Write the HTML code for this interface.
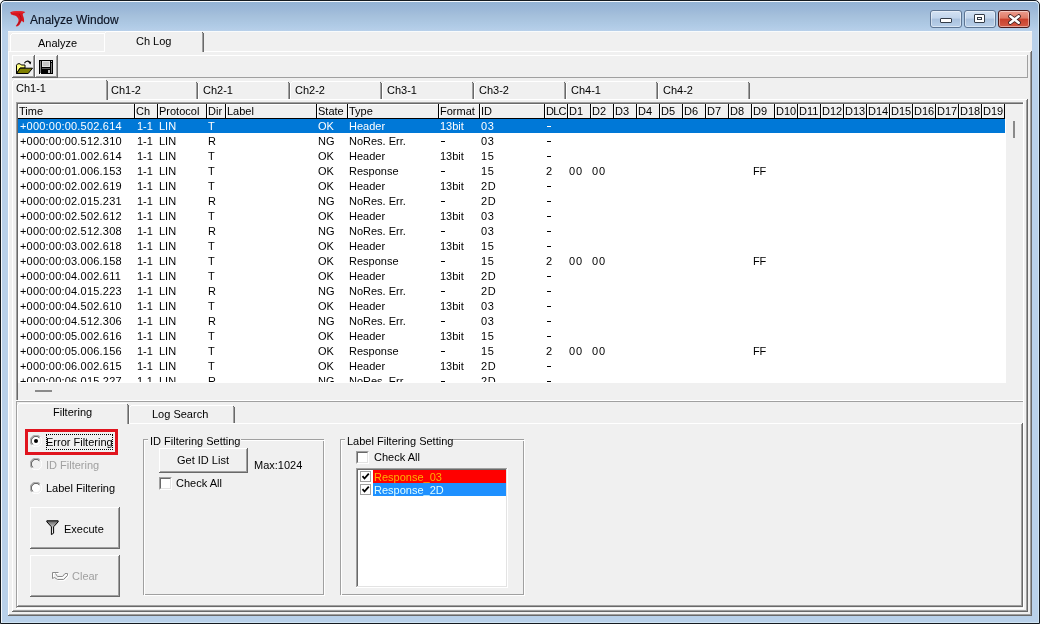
<!DOCTYPE html><html><head><meta charset="utf-8"><style>
html,body{margin:0;padding:0;}
body{width:1040px;height:624px;overflow:hidden;position:relative;background:#ffffff;font-family:"Liberation Sans",sans-serif;}
div{position:absolute;box-sizing:border-box;}
.t{white-space:pre;font-size:11px;}
</style></head><body><div style="left:0;top:0;width:1040px;height:624px;overflow:hidden;will-change:transform">
<div style="left:0px;top:0px;width:1040px;height:624px;background:#b9d1ea;border:1px solid #141a20;border-radius:5px 5px 0 0"></div>
<div style="left:1px;top:1px;width:1038px;height:622px;border:1px solid #f4f8fc;border-radius:5px 5px 0 0;border-right-color:#cfe3f2;border-bottom-color:#cfe3f2"></div>
<div style="left:2px;top:2px;width:1036px;height:29px;background:linear-gradient(#93b3d4 0%,#9cb8d8 25%,#a6c1dc 50%,#afcae5 80%,#b8d0ea 100%);border-radius:4px 4px 0 0"></div>
<div style="left:2px;top:31px;width:6px;height:585px;background:#b9d1ea"></div>
<div style="left:1032px;top:31px;width:6px;height:585px;background:#b9d1ea"></div>
<svg style="position:absolute;left:8px;top:8px" width="20" height="20" viewBox="8 8 20 20">
<path d="M10.2 12.2 C12 11.2 17 10.8 21 11 C23 11.2 24.5 11.6 25.3 12.3 L23.4 13.3 C22.5 14 22.6 15 23.2 16.2 C23.9 17.8 24.3 20 24 22.4 C23 21.8 22.2 21.2 21.6 20.8 C21 22.5 20 24 19.5 24.8 C18.5 25.8 17.5 26.3 16.7 26.6 L15.7 26 C17 24.5 18.6 22 18.6 20.2 C18.6 18.5 17.5 17.2 16 16 C14.5 15.2 12.5 14.8 11.2 14.4 Z" fill="#d8161e"/>
<path d="M19 14 C21 16 21.5 19 20.5 21.5 M17.5 25 C18.5 24 19.5 22.5 20 21" stroke="#a01020" stroke-width="0.9" fill="none"/>
<path d="M12 12.3 C15 11.8 19 11.6 23 12" stroke="#f04048" stroke-width="0.7" fill="none"/>
</svg>
<div class="t" style="left:30px;top:12.84px;color:#0c1424;font-size:12px;line-height:14px;-webkit-text-stroke:0.15px #0c1424">Analyze Window</div>
<div style="left:930px;top:10px;width:32px;height:18px;border:1px solid #5d7593;border-radius:3px;background:linear-gradient(#d3e2f3 0%,#c1d5ec 45%,#a9c1dd 50%,#b9d0ea 100%);box-shadow:inset 0 0 0 1px rgba(255,255,255,0.45)"><div style="left:9px;top:7px;width:12px;height:5px;background:#fff;border:1px solid #333c48;border-radius:1px"></div></div>
<div style="left:964px;top:10px;width:32px;height:18px;border:1px solid #5d7593;border-radius:3px;background:linear-gradient(#d3e2f3 0%,#c1d5ec 45%,#a9c1dd 50%,#b9d0ea 100%);box-shadow:inset 0 0 0 1px rgba(255,255,255,0.45)"><div style="left:9px;top:3px;width:11px;height:9px;background:#fff;border:1px solid #333c48;border-radius:1px"><div style="left:2px;top:2px;width:5px;height:3px;background:#fff;border:1px solid #333c48"></div></div></div>
<div style="left:998px;top:10px;width:32px;height:18px;border:1px solid #4a1a1a;border-radius:3px;background:linear-gradient(#eb9d8f 0%,#e07a66 45%,#c9402c 50%,#d45a45 100%);box-shadow:inset 0 0 0 1px rgba(255,255,255,0.45)"><svg style="position:absolute;left:9px;top:3px" width="13" height="11" viewBox="0 0 13 11"><path d="M2.3 2.3 L10.7 8.7 M10.7 2.3 L2.3 8.7" stroke="#3a2020" stroke-width="4.2" stroke-linecap="round"/><path d="M2.3 2.3 L10.7 8.7 M10.7 2.3 L2.3 8.7" stroke="#fff" stroke-width="2.5" stroke-linecap="round"/></svg></div>
<div style="left:8px;top:31px;width:1024px;height:585px;background:#f0f0f0"></div>
<div style="left:8px;top:31px;width:1024px;height:1px;background:#f8fbfc"></div>
<div style="left:8px;top:51px;width:1024px;height:1px;background:#ffffff"></div>
<div style="left:8px;top:51px;width:1px;height:565px;background:#ffffff"></div>
<div style="left:1031px;top:51px;width:1px;height:565px;background:#696969"></div>
<div style="left:1030px;top:52px;width:1px;height:563px;background:#a0a0a0"></div>
<div style="left:8px;top:615px;width:1024px;height:1px;background:#696969"></div>
<div style="left:9px;top:614px;width:1022px;height:1px;background:#a0a0a0"></div>
<div style="left:12px;top:33px;width:92px;height:1px;background:#ffffff"></div>
<div style="left:10px;top:35px;width:1px;height:16px;background:#ffffff"></div>
<div style="left:11px;top:34px;width:1px;height:1px;background:#ffffff"></div>
<div class="t" style="left:38px;top:36.19px;color:#000;font-size:11px;line-height:14px;">Analyze</div>
<div style="left:105px;top:32px;width:98px;height:20px;background:#f0f0f0"></div>
<div style="left:106px;top:31px;width:96px;height:1px;background:#ffffff"></div>
<div style="left:104px;top:33px;width:1px;height:19px;background:#ffffff"></div>
<div style="left:105px;top:32px;width:1px;height:1px;background:#ffffff"></div>
<div style="left:203px;top:33px;width:1px;height:19px;background:#696969"></div>
<div style="left:202px;top:32px;width:1px;height:20px;background:#a0a0a0"></div>
<div style="left:202px;top:32px;width:1px;height:1px;background:#696969"></div>
<div class="t" style="left:136px;top:34.19px;color:#000;font-size:11px;line-height:14px;">Ch Log</div>
<div style="left:12px;top:55px;width:1016px;height:1px;background:#ffffff"></div>
<div style="left:12px;top:55px;width:1px;height:23px;background:#ffffff"></div>
<div style="left:1027px;top:55px;width:1px;height:23px;background:#a0a0a0"></div>
<div style="left:12px;top:77px;width:1016px;height:1px;background:#a0a0a0"></div>
<div style="left:12px;top:55px;width:23px;height:1px;background:#ffffff"></div>
<div style="left:12px;top:55px;width:1px;height:23px;background:#ffffff"></div>
<div style="left:34px;top:55px;width:1px;height:23px;background:#696969"></div>
<div style="left:12px;top:77px;width:23px;height:1px;background:#696969"></div>
<div style="left:33px;top:56px;width:1px;height:21px;background:#a0a0a0"></div>
<div style="left:13px;top:76px;width:21px;height:1px;background:#a0a0a0"></div>
<div style="left:35px;top:55px;width:23px;height:1px;background:#ffffff"></div>
<div style="left:35px;top:55px;width:1px;height:23px;background:#ffffff"></div>
<div style="left:57px;top:55px;width:1px;height:23px;background:#696969"></div>
<div style="left:35px;top:77px;width:23px;height:1px;background:#696969"></div>
<div style="left:56px;top:56px;width:1px;height:21px;background:#a0a0a0"></div>
<div style="left:36px;top:76px;width:21px;height:1px;background:#a0a0a0"></div>
<svg style="position:absolute;left:14px;top:58px" width="20" height="18" viewBox="14 58 20 18">
<path d="M24.5 63.2 C25.5 61 28 60.3 29.8 62.2" fill="none" stroke="#000" stroke-width="1.1"/>
<path d="M28.3 62.6 L30.6 64.6 L31.2 61.6 Z" fill="#000"/>
<path d="M16.5 73.5 L16.5 65.2 L17.7 63.8 L20.2 63.8 L21.3 65 L25 65 L25 68 L20 68 L16.5 73.5 Z" fill="#ffff80" stroke="#000" stroke-width="1"/>
<path d="M16.5 73.5 L20.3 68.2 L32.5 68.2 L28.2 73.5 Z" fill="#808000" stroke="#000" stroke-width="1" stroke-linejoin="round"/>
</svg>
<svg style="position:absolute;left:38px;top:59px" width="16" height="16" viewBox="38 59 16 16" shape-rendering="crispEdges">
<rect x="39" y="60" width="14" height="14" fill="#000"/>
<rect x="40" y="61" width="1" height="12" fill="#808080"/>
<rect x="51" y="63" width="1" height="10" fill="#808080"/>
<rect x="51" y="61" width="1" height="1" fill="#c0c0c0"/>
<rect x="42" y="61" width="8" height="6" fill="#e0e0e0"/>
<rect x="43" y="62" width="6" height="4" fill="#c4c4c4"/>
<rect x="42" y="68" width="8" height="1" fill="#606060"/>
<rect x="48" y="70" width="2" height="3" fill="#c0c0c0"/>
<rect x="40" y="73" width="1" height="1" fill="#ffffff"/>
</svg>
<div style="left:12px;top:99px;width:1016px;height:1px;background:#ffffff"></div>
<div style="left:12px;top:99px;width:1px;height:513px;background:#ffffff"></div>
<div style="left:1027px;top:99px;width:1px;height:513px;background:#696969"></div>
<div style="left:1026px;top:100px;width:1px;height:511px;background:#a0a0a0"></div>
<div style="left:12px;top:611px;width:1016px;height:1px;background:#696969"></div>
<div style="left:13px;top:610px;width:1014px;height:1px;background:#a0a0a0"></div>
<div style="left:106px;top:81px;width:92px;height:18px;background:#f0f0f0"></div>
<div style="left:108px;top:81px;width:88px;height:1px;background:#ffffff"></div>
<div style="left:106px;top:83px;width:1px;height:16px;background:#ffffff"></div>
<div style="left:107px;top:82px;width:1px;height:1px;background:#ffffff"></div>
<div style="left:197px;top:83px;width:1px;height:16px;background:#696969"></div>
<div style="left:196px;top:82px;width:1px;height:17px;background:#a0a0a0"></div>
<div style="left:196px;top:82px;width:1px;height:1px;background:#696969"></div>
<div class="t" style="left:111px;top:83.19px;color:#000;font-size:11px;line-height:14px;">Ch1-2</div>
<div style="left:198px;top:81px;width:92px;height:18px;background:#f0f0f0"></div>
<div style="left:200px;top:81px;width:88px;height:1px;background:#ffffff"></div>
<div style="left:198px;top:83px;width:1px;height:16px;background:#ffffff"></div>
<div style="left:199px;top:82px;width:1px;height:1px;background:#ffffff"></div>
<div style="left:289px;top:83px;width:1px;height:16px;background:#696969"></div>
<div style="left:288px;top:82px;width:1px;height:17px;background:#a0a0a0"></div>
<div style="left:288px;top:82px;width:1px;height:1px;background:#696969"></div>
<div class="t" style="left:203px;top:83.19px;color:#000;font-size:11px;line-height:14px;">Ch2-1</div>
<div style="left:290px;top:81px;width:92px;height:18px;background:#f0f0f0"></div>
<div style="left:292px;top:81px;width:88px;height:1px;background:#ffffff"></div>
<div style="left:290px;top:83px;width:1px;height:16px;background:#ffffff"></div>
<div style="left:291px;top:82px;width:1px;height:1px;background:#ffffff"></div>
<div style="left:381px;top:83px;width:1px;height:16px;background:#696969"></div>
<div style="left:380px;top:82px;width:1px;height:17px;background:#a0a0a0"></div>
<div style="left:380px;top:82px;width:1px;height:1px;background:#696969"></div>
<div class="t" style="left:295px;top:83.19px;color:#000;font-size:11px;line-height:14px;">Ch2-2</div>
<div style="left:382px;top:81px;width:92px;height:18px;background:#f0f0f0"></div>
<div style="left:384px;top:81px;width:88px;height:1px;background:#ffffff"></div>
<div style="left:382px;top:83px;width:1px;height:16px;background:#ffffff"></div>
<div style="left:383px;top:82px;width:1px;height:1px;background:#ffffff"></div>
<div style="left:473px;top:83px;width:1px;height:16px;background:#696969"></div>
<div style="left:472px;top:82px;width:1px;height:17px;background:#a0a0a0"></div>
<div style="left:472px;top:82px;width:1px;height:1px;background:#696969"></div>
<div class="t" style="left:387px;top:83.19px;color:#000;font-size:11px;line-height:14px;">Ch3-1</div>
<div style="left:474px;top:81px;width:92px;height:18px;background:#f0f0f0"></div>
<div style="left:476px;top:81px;width:88px;height:1px;background:#ffffff"></div>
<div style="left:474px;top:83px;width:1px;height:16px;background:#ffffff"></div>
<div style="left:475px;top:82px;width:1px;height:1px;background:#ffffff"></div>
<div style="left:565px;top:83px;width:1px;height:16px;background:#696969"></div>
<div style="left:564px;top:82px;width:1px;height:17px;background:#a0a0a0"></div>
<div style="left:564px;top:82px;width:1px;height:1px;background:#696969"></div>
<div class="t" style="left:479px;top:83.19px;color:#000;font-size:11px;line-height:14px;">Ch3-2</div>
<div style="left:566px;top:81px;width:92px;height:18px;background:#f0f0f0"></div>
<div style="left:568px;top:81px;width:88px;height:1px;background:#ffffff"></div>
<div style="left:566px;top:83px;width:1px;height:16px;background:#ffffff"></div>
<div style="left:567px;top:82px;width:1px;height:1px;background:#ffffff"></div>
<div style="left:657px;top:83px;width:1px;height:16px;background:#696969"></div>
<div style="left:656px;top:82px;width:1px;height:17px;background:#a0a0a0"></div>
<div style="left:656px;top:82px;width:1px;height:1px;background:#696969"></div>
<div class="t" style="left:571px;top:83.19px;color:#000;font-size:11px;line-height:14px;">Ch4-1</div>
<div style="left:658px;top:81px;width:92px;height:18px;background:#f0f0f0"></div>
<div style="left:660px;top:81px;width:88px;height:1px;background:#ffffff"></div>
<div style="left:658px;top:83px;width:1px;height:16px;background:#ffffff"></div>
<div style="left:659px;top:82px;width:1px;height:1px;background:#ffffff"></div>
<div style="left:749px;top:83px;width:1px;height:16px;background:#696969"></div>
<div style="left:748px;top:82px;width:1px;height:17px;background:#a0a0a0"></div>
<div style="left:748px;top:82px;width:1px;height:1px;background:#696969"></div>
<div class="t" style="left:663px;top:83.19px;color:#000;font-size:11px;line-height:14px;">Ch4-2</div>
<div style="left:12px;top:79px;width:96px;height:21px;background:#f0f0f0"></div>
<div style="left:14px;top:79px;width:92px;height:1px;background:#ffffff"></div>
<div style="left:12px;top:81px;width:1px;height:19px;background:#ffffff"></div>
<div style="left:13px;top:80px;width:1px;height:1px;background:#ffffff"></div>
<div style="left:107px;top:81px;width:1px;height:19px;background:#696969"></div>
<div style="left:106px;top:80px;width:1px;height:20px;background:#a0a0a0"></div>
<div style="left:106px;top:80px;width:1px;height:1px;background:#696969"></div>
<div class="t" style="left:16px;top:81.19px;color:#000;font-size:11px;line-height:14px;">Ch1-1</div>
<div style="left:16px;top:102px;width:1008px;height:1px;background:#a0a0a0"></div>
<div style="left:16px;top:102px;width:1px;height:299px;background:#a0a0a0"></div>
<div style="left:17px;top:103px;width:1006px;height:1px;background:#696969"></div>
<div style="left:17px;top:103px;width:1px;height:297px;background:#696969"></div>
<div style="left:16px;top:400px;width:1008px;height:1px;background:#ffffff"></div>
<div style="left:1023px;top:102px;width:1px;height:299px;background:#ffffff"></div>
<div style="left:18px;top:104px;width:1005px;height:295px;background:#f0f0f0"></div>
<div style="left:18px;top:119px;width:988px;height:264px;background:#ffffff"></div>
<div style="left:18px;top:104px;width:117px;height:15px;background:#f0f0f0"></div>
<div style="left:18px;top:104px;width:116px;height:1px;background:#ffffff"></div>
<div style="left:18px;top:104px;width:1px;height:14px;background:#ffffff"></div>
<div style="left:134px;top:104px;width:1px;height:15px;background:#000"></div>
<div style="left:18px;top:118px;width:117px;height:1px;background:#000"></div>
<div class="t" style="left:19px;top:104.19px;color:#000;font-size:11px;line-height:14px;">Time</div>
<div style="left:135px;top:104px;width:23px;height:15px;background:#f0f0f0"></div>
<div style="left:135px;top:104px;width:22px;height:1px;background:#ffffff"></div>
<div style="left:135px;top:104px;width:1px;height:14px;background:#ffffff"></div>
<div style="left:157px;top:104px;width:1px;height:15px;background:#000"></div>
<div style="left:135px;top:118px;width:23px;height:1px;background:#000"></div>
<div class="t" style="left:136px;top:104.19px;color:#000;font-size:11px;line-height:14px;">Ch</div>
<div style="left:158px;top:104px;width:49px;height:15px;background:#f0f0f0"></div>
<div style="left:158px;top:104px;width:48px;height:1px;background:#ffffff"></div>
<div style="left:158px;top:104px;width:1px;height:14px;background:#ffffff"></div>
<div style="left:206px;top:104px;width:1px;height:15px;background:#000"></div>
<div style="left:158px;top:118px;width:49px;height:1px;background:#000"></div>
<div class="t" style="left:159px;top:104.19px;color:#000;font-size:11px;line-height:14px;">Protocol</div>
<div style="left:207px;top:104px;width:19px;height:15px;background:#f0f0f0"></div>
<div style="left:207px;top:104px;width:18px;height:1px;background:#ffffff"></div>
<div style="left:207px;top:104px;width:1px;height:14px;background:#ffffff"></div>
<div style="left:225px;top:104px;width:1px;height:15px;background:#000"></div>
<div style="left:207px;top:118px;width:19px;height:1px;background:#000"></div>
<div class="t" style="left:208px;top:104.19px;color:#000;font-size:11px;line-height:14px;">Dir</div>
<div style="left:226px;top:104px;width:91px;height:15px;background:#f0f0f0"></div>
<div style="left:226px;top:104px;width:90px;height:1px;background:#ffffff"></div>
<div style="left:226px;top:104px;width:1px;height:14px;background:#ffffff"></div>
<div style="left:316px;top:104px;width:1px;height:15px;background:#000"></div>
<div style="left:226px;top:118px;width:91px;height:1px;background:#000"></div>
<div class="t" style="left:227px;top:104.19px;color:#000;font-size:11px;line-height:14px;">Label</div>
<div style="left:317px;top:104px;width:31px;height:15px;background:#f0f0f0"></div>
<div style="left:317px;top:104px;width:30px;height:1px;background:#ffffff"></div>
<div style="left:317px;top:104px;width:1px;height:14px;background:#ffffff"></div>
<div style="left:347px;top:104px;width:1px;height:15px;background:#000"></div>
<div style="left:317px;top:118px;width:31px;height:1px;background:#000"></div>
<div class="t" style="left:318px;top:104.19px;color:#000;font-size:11px;line-height:14px;">State</div>
<div style="left:348px;top:104px;width:91px;height:15px;background:#f0f0f0"></div>
<div style="left:348px;top:104px;width:90px;height:1px;background:#ffffff"></div>
<div style="left:348px;top:104px;width:1px;height:14px;background:#ffffff"></div>
<div style="left:438px;top:104px;width:1px;height:15px;background:#000"></div>
<div style="left:348px;top:118px;width:91px;height:1px;background:#000"></div>
<div class="t" style="left:349px;top:104.19px;color:#000;font-size:11px;line-height:14px;">Type</div>
<div style="left:439px;top:104px;width:41px;height:15px;background:#f0f0f0"></div>
<div style="left:439px;top:104px;width:40px;height:1px;background:#ffffff"></div>
<div style="left:439px;top:104px;width:1px;height:14px;background:#ffffff"></div>
<div style="left:479px;top:104px;width:1px;height:15px;background:#000"></div>
<div style="left:439px;top:118px;width:41px;height:1px;background:#000"></div>
<div class="t" style="left:440px;top:104.19px;color:#000;font-size:11px;line-height:14px;">Format</div>
<div style="left:480px;top:104px;width:65px;height:15px;background:#f0f0f0"></div>
<div style="left:480px;top:104px;width:64px;height:1px;background:#ffffff"></div>
<div style="left:480px;top:104px;width:1px;height:14px;background:#ffffff"></div>
<div style="left:544px;top:104px;width:1px;height:15px;background:#000"></div>
<div style="left:480px;top:118px;width:65px;height:1px;background:#000"></div>
<div class="t" style="left:481px;top:104.19px;color:#000;font-size:11px;line-height:14px;">ID</div>
<div style="left:545px;top:104px;width:23px;height:15px;background:#f0f0f0"></div>
<div style="left:545px;top:104px;width:22px;height:1px;background:#ffffff"></div>
<div style="left:545px;top:104px;width:1px;height:14px;background:#ffffff"></div>
<div style="left:567px;top:104px;width:1px;height:15px;background:#000"></div>
<div style="left:545px;top:118px;width:23px;height:1px;background:#000"></div>
<div class="t" style="left:546px;top:104.19px;color:#000;font-size:11px;line-height:14px;letter-spacing:-0.8px">DLC</div>
<div style="left:568px;top:104px;width:23px;height:15px;background:#f0f0f0"></div>
<div style="left:568px;top:104px;width:22px;height:1px;background:#ffffff"></div>
<div style="left:568px;top:104px;width:1px;height:14px;background:#ffffff"></div>
<div style="left:590px;top:104px;width:1px;height:15px;background:#000"></div>
<div style="left:568px;top:118px;width:23px;height:1px;background:#000"></div>
<div class="t" style="left:569px;top:104.19px;color:#000;font-size:11px;line-height:14px;">D1</div>
<div style="left:591px;top:104px;width:23px;height:15px;background:#f0f0f0"></div>
<div style="left:591px;top:104px;width:22px;height:1px;background:#ffffff"></div>
<div style="left:591px;top:104px;width:1px;height:14px;background:#ffffff"></div>
<div style="left:613px;top:104px;width:1px;height:15px;background:#000"></div>
<div style="left:591px;top:118px;width:23px;height:1px;background:#000"></div>
<div class="t" style="left:592px;top:104.19px;color:#000;font-size:11px;line-height:14px;">D2</div>
<div style="left:614px;top:104px;width:23px;height:15px;background:#f0f0f0"></div>
<div style="left:614px;top:104px;width:22px;height:1px;background:#ffffff"></div>
<div style="left:614px;top:104px;width:1px;height:14px;background:#ffffff"></div>
<div style="left:636px;top:104px;width:1px;height:15px;background:#000"></div>
<div style="left:614px;top:118px;width:23px;height:1px;background:#000"></div>
<div class="t" style="left:615px;top:104.19px;color:#000;font-size:11px;line-height:14px;">D3</div>
<div style="left:637px;top:104px;width:23px;height:15px;background:#f0f0f0"></div>
<div style="left:637px;top:104px;width:22px;height:1px;background:#ffffff"></div>
<div style="left:637px;top:104px;width:1px;height:14px;background:#ffffff"></div>
<div style="left:659px;top:104px;width:1px;height:15px;background:#000"></div>
<div style="left:637px;top:118px;width:23px;height:1px;background:#000"></div>
<div class="t" style="left:638px;top:104.19px;color:#000;font-size:11px;line-height:14px;">D4</div>
<div style="left:660px;top:104px;width:23px;height:15px;background:#f0f0f0"></div>
<div style="left:660px;top:104px;width:22px;height:1px;background:#ffffff"></div>
<div style="left:660px;top:104px;width:1px;height:14px;background:#ffffff"></div>
<div style="left:682px;top:104px;width:1px;height:15px;background:#000"></div>
<div style="left:660px;top:118px;width:23px;height:1px;background:#000"></div>
<div class="t" style="left:661px;top:104.19px;color:#000;font-size:11px;line-height:14px;">D5</div>
<div style="left:683px;top:104px;width:23px;height:15px;background:#f0f0f0"></div>
<div style="left:683px;top:104px;width:22px;height:1px;background:#ffffff"></div>
<div style="left:683px;top:104px;width:1px;height:14px;background:#ffffff"></div>
<div style="left:705px;top:104px;width:1px;height:15px;background:#000"></div>
<div style="left:683px;top:118px;width:23px;height:1px;background:#000"></div>
<div class="t" style="left:684px;top:104.19px;color:#000;font-size:11px;line-height:14px;">D6</div>
<div style="left:706px;top:104px;width:23px;height:15px;background:#f0f0f0"></div>
<div style="left:706px;top:104px;width:22px;height:1px;background:#ffffff"></div>
<div style="left:706px;top:104px;width:1px;height:14px;background:#ffffff"></div>
<div style="left:728px;top:104px;width:1px;height:15px;background:#000"></div>
<div style="left:706px;top:118px;width:23px;height:1px;background:#000"></div>
<div class="t" style="left:707px;top:104.19px;color:#000;font-size:11px;line-height:14px;">D7</div>
<div style="left:729px;top:104px;width:23px;height:15px;background:#f0f0f0"></div>
<div style="left:729px;top:104px;width:22px;height:1px;background:#ffffff"></div>
<div style="left:729px;top:104px;width:1px;height:14px;background:#ffffff"></div>
<div style="left:751px;top:104px;width:1px;height:15px;background:#000"></div>
<div style="left:729px;top:118px;width:23px;height:1px;background:#000"></div>
<div class="t" style="left:730px;top:104.19px;color:#000;font-size:11px;line-height:14px;">D8</div>
<div style="left:752px;top:104px;width:23px;height:15px;background:#f0f0f0"></div>
<div style="left:752px;top:104px;width:22px;height:1px;background:#ffffff"></div>
<div style="left:752px;top:104px;width:1px;height:14px;background:#ffffff"></div>
<div style="left:774px;top:104px;width:1px;height:15px;background:#000"></div>
<div style="left:752px;top:118px;width:23px;height:1px;background:#000"></div>
<div class="t" style="left:753px;top:104.19px;color:#000;font-size:11px;line-height:14px;">D9</div>
<div style="left:775px;top:104px;width:23px;height:15px;background:#f0f0f0"></div>
<div style="left:775px;top:104px;width:22px;height:1px;background:#ffffff"></div>
<div style="left:775px;top:104px;width:1px;height:14px;background:#ffffff"></div>
<div style="left:797px;top:104px;width:1px;height:15px;background:#000"></div>
<div style="left:775px;top:118px;width:23px;height:1px;background:#000"></div>
<div class="t" style="left:776px;top:104.19px;color:#000;font-size:11px;line-height:14px;">D10</div>
<div style="left:798px;top:104px;width:23px;height:15px;background:#f0f0f0"></div>
<div style="left:798px;top:104px;width:22px;height:1px;background:#ffffff"></div>
<div style="left:798px;top:104px;width:1px;height:14px;background:#ffffff"></div>
<div style="left:820px;top:104px;width:1px;height:15px;background:#000"></div>
<div style="left:798px;top:118px;width:23px;height:1px;background:#000"></div>
<div class="t" style="left:799px;top:104.19px;color:#000;font-size:11px;line-height:14px;">D11</div>
<div style="left:821px;top:104px;width:23px;height:15px;background:#f0f0f0"></div>
<div style="left:821px;top:104px;width:22px;height:1px;background:#ffffff"></div>
<div style="left:821px;top:104px;width:1px;height:14px;background:#ffffff"></div>
<div style="left:843px;top:104px;width:1px;height:15px;background:#000"></div>
<div style="left:821px;top:118px;width:23px;height:1px;background:#000"></div>
<div class="t" style="left:822px;top:104.19px;color:#000;font-size:11px;line-height:14px;">D12</div>
<div style="left:844px;top:104px;width:23px;height:15px;background:#f0f0f0"></div>
<div style="left:844px;top:104px;width:22px;height:1px;background:#ffffff"></div>
<div style="left:844px;top:104px;width:1px;height:14px;background:#ffffff"></div>
<div style="left:866px;top:104px;width:1px;height:15px;background:#000"></div>
<div style="left:844px;top:118px;width:23px;height:1px;background:#000"></div>
<div class="t" style="left:845px;top:104.19px;color:#000;font-size:11px;line-height:14px;">D13</div>
<div style="left:867px;top:104px;width:23px;height:15px;background:#f0f0f0"></div>
<div style="left:867px;top:104px;width:22px;height:1px;background:#ffffff"></div>
<div style="left:867px;top:104px;width:1px;height:14px;background:#ffffff"></div>
<div style="left:889px;top:104px;width:1px;height:15px;background:#000"></div>
<div style="left:867px;top:118px;width:23px;height:1px;background:#000"></div>
<div class="t" style="left:868px;top:104.19px;color:#000;font-size:11px;line-height:14px;">D14</div>
<div style="left:890px;top:104px;width:23px;height:15px;background:#f0f0f0"></div>
<div style="left:890px;top:104px;width:22px;height:1px;background:#ffffff"></div>
<div style="left:890px;top:104px;width:1px;height:14px;background:#ffffff"></div>
<div style="left:912px;top:104px;width:1px;height:15px;background:#000"></div>
<div style="left:890px;top:118px;width:23px;height:1px;background:#000"></div>
<div class="t" style="left:891px;top:104.19px;color:#000;font-size:11px;line-height:14px;">D15</div>
<div style="left:913px;top:104px;width:23px;height:15px;background:#f0f0f0"></div>
<div style="left:913px;top:104px;width:22px;height:1px;background:#ffffff"></div>
<div style="left:913px;top:104px;width:1px;height:14px;background:#ffffff"></div>
<div style="left:935px;top:104px;width:1px;height:15px;background:#000"></div>
<div style="left:913px;top:118px;width:23px;height:1px;background:#000"></div>
<div class="t" style="left:914px;top:104.19px;color:#000;font-size:11px;line-height:14px;">D16</div>
<div style="left:936px;top:104px;width:23px;height:15px;background:#f0f0f0"></div>
<div style="left:936px;top:104px;width:22px;height:1px;background:#ffffff"></div>
<div style="left:936px;top:104px;width:1px;height:14px;background:#ffffff"></div>
<div style="left:958px;top:104px;width:1px;height:15px;background:#000"></div>
<div style="left:936px;top:118px;width:23px;height:1px;background:#000"></div>
<div class="t" style="left:937px;top:104.19px;color:#000;font-size:11px;line-height:14px;">D17</div>
<div style="left:959px;top:104px;width:23px;height:15px;background:#f0f0f0"></div>
<div style="left:959px;top:104px;width:22px;height:1px;background:#ffffff"></div>
<div style="left:959px;top:104px;width:1px;height:14px;background:#ffffff"></div>
<div style="left:981px;top:104px;width:1px;height:15px;background:#000"></div>
<div style="left:959px;top:118px;width:23px;height:1px;background:#000"></div>
<div class="t" style="left:960px;top:104.19px;color:#000;font-size:11px;line-height:14px;">D18</div>
<div style="left:982px;top:104px;width:23px;height:15px;background:#f0f0f0"></div>
<div style="left:982px;top:104px;width:22px;height:1px;background:#ffffff"></div>
<div style="left:982px;top:104px;width:1px;height:14px;background:#ffffff"></div>
<div style="left:1004px;top:104px;width:1px;height:15px;background:#000"></div>
<div style="left:982px;top:118px;width:23px;height:1px;background:#000"></div>
<div class="t" style="left:983px;top:104.19px;color:#000;font-size:11px;line-height:14px;">D19</div>
<div style="left:18px;top:119px;width:988px;height:263px;overflow:hidden">
<div style="left:0px;top:0px;width:987px;height:14px;background:#0078d7"></div>
<div class="t" style="left:2px;top:0.19px;color:#fff;font-size:11px;line-height:14px;letter-spacing:0.2px">+000:00:00.502.614</div>
<div class="t" style="left:119px;top:0.19px;color:#fff;font-size:11px;line-height:14px;">1-1</div>
<div class="t" style="left:141px;top:0.19px;color:#fff;font-size:11px;line-height:14px;">LIN</div>
<div class="t" style="left:190px;top:0.19px;color:#fff;font-size:11px;line-height:14px;">T</div>
<div class="t" style="left:300px;top:0.19px;color:#fff;font-size:11px;line-height:14px;">OK</div>
<div class="t" style="left:331px;top:0.19px;color:#fff;font-size:11px;line-height:14px;">Header</div>
<div class="t" style="left:422px;top:0.19px;color:#fff;font-size:11px;line-height:14px;">13bit</div>
<div class="t" style="left:463px;top:0.19px;color:#fff;font-size:11px;line-height:14px;letter-spacing:0.6px">03</div>
<div style="left:529px;top:7px;width:4px;height:1px;background:#fff"></div>
<div class="t" style="left:2px;top:15.19px;color:#000;font-size:11px;line-height:14px;letter-spacing:0.2px">+000:00:00.512.310</div>
<div class="t" style="left:119px;top:15.19px;color:#000;font-size:11px;line-height:14px;">1-1</div>
<div class="t" style="left:141px;top:15.19px;color:#000;font-size:11px;line-height:14px;">LIN</div>
<div class="t" style="left:190px;top:15.19px;color:#000;font-size:11px;line-height:14px;">R</div>
<div class="t" style="left:300px;top:15.19px;color:#000;font-size:11px;line-height:14px;">NG</div>
<div class="t" style="left:331px;top:15.19px;color:#000;font-size:11px;line-height:14px;">NoRes. Err.</div>
<div style="left:423px;top:22px;width:4px;height:1px;background:#000"></div>
<div class="t" style="left:463px;top:15.19px;color:#000;font-size:11px;line-height:14px;letter-spacing:0.6px">03</div>
<div style="left:529px;top:22px;width:4px;height:1px;background:#000"></div>
<div class="t" style="left:2px;top:30.19px;color:#000;font-size:11px;line-height:14px;letter-spacing:0.2px">+000:00:01.002.614</div>
<div class="t" style="left:119px;top:30.19px;color:#000;font-size:11px;line-height:14px;">1-1</div>
<div class="t" style="left:141px;top:30.19px;color:#000;font-size:11px;line-height:14px;">LIN</div>
<div class="t" style="left:190px;top:30.19px;color:#000;font-size:11px;line-height:14px;">T</div>
<div class="t" style="left:300px;top:30.19px;color:#000;font-size:11px;line-height:14px;">OK</div>
<div class="t" style="left:331px;top:30.19px;color:#000;font-size:11px;line-height:14px;">Header</div>
<div class="t" style="left:422px;top:30.19px;color:#000;font-size:11px;line-height:14px;">13bit</div>
<div class="t" style="left:463px;top:30.19px;color:#000;font-size:11px;line-height:14px;letter-spacing:0.6px">15</div>
<div style="left:529px;top:37px;width:4px;height:1px;background:#000"></div>
<div class="t" style="left:2px;top:45.19px;color:#000;font-size:11px;line-height:14px;letter-spacing:0.2px">+000:00:01.006.153</div>
<div class="t" style="left:119px;top:45.19px;color:#000;font-size:11px;line-height:14px;">1-1</div>
<div class="t" style="left:141px;top:45.19px;color:#000;font-size:11px;line-height:14px;">LIN</div>
<div class="t" style="left:190px;top:45.19px;color:#000;font-size:11px;line-height:14px;">T</div>
<div class="t" style="left:300px;top:45.19px;color:#000;font-size:11px;line-height:14px;">OK</div>
<div class="t" style="left:331px;top:45.19px;color:#000;font-size:11px;line-height:14px;">Response</div>
<div style="left:423px;top:52px;width:4px;height:1px;background:#000"></div>
<div class="t" style="left:463px;top:45.19px;color:#000;font-size:11px;line-height:14px;letter-spacing:0.6px">15</div>
<div class="t" style="left:528px;top:45.19px;color:#000;font-size:11px;line-height:14px;letter-spacing:0.6px">2</div>
<div class="t" style="left:551px;top:45.19px;color:#000;font-size:11px;line-height:14px;letter-spacing:0.8px">00</div>
<div class="t" style="left:574px;top:45.19px;color:#000;font-size:11px;line-height:14px;letter-spacing:0.8px">00</div>
<div class="t" style="left:735px;top:45.19px;color:#000;font-size:11px;line-height:14px;letter-spacing:-0.2px">FF</div>
<div class="t" style="left:2px;top:60.19px;color:#000;font-size:11px;line-height:14px;letter-spacing:0.2px">+000:00:02.002.619</div>
<div class="t" style="left:119px;top:60.19px;color:#000;font-size:11px;line-height:14px;">1-1</div>
<div class="t" style="left:141px;top:60.19px;color:#000;font-size:11px;line-height:14px;">LIN</div>
<div class="t" style="left:190px;top:60.19px;color:#000;font-size:11px;line-height:14px;">T</div>
<div class="t" style="left:300px;top:60.19px;color:#000;font-size:11px;line-height:14px;">OK</div>
<div class="t" style="left:331px;top:60.19px;color:#000;font-size:11px;line-height:14px;">Header</div>
<div class="t" style="left:422px;top:60.19px;color:#000;font-size:11px;line-height:14px;">13bit</div>
<div class="t" style="left:463px;top:60.19px;color:#000;font-size:11px;line-height:14px;letter-spacing:0.6px">2D</div>
<div style="left:529px;top:67px;width:4px;height:1px;background:#000"></div>
<div class="t" style="left:2px;top:75.19px;color:#000;font-size:11px;line-height:14px;letter-spacing:0.2px">+000:00:02.015.231</div>
<div class="t" style="left:119px;top:75.19px;color:#000;font-size:11px;line-height:14px;">1-1</div>
<div class="t" style="left:141px;top:75.19px;color:#000;font-size:11px;line-height:14px;">LIN</div>
<div class="t" style="left:190px;top:75.19px;color:#000;font-size:11px;line-height:14px;">R</div>
<div class="t" style="left:300px;top:75.19px;color:#000;font-size:11px;line-height:14px;">NG</div>
<div class="t" style="left:331px;top:75.19px;color:#000;font-size:11px;line-height:14px;">NoRes. Err.</div>
<div style="left:423px;top:82px;width:4px;height:1px;background:#000"></div>
<div class="t" style="left:463px;top:75.19px;color:#000;font-size:11px;line-height:14px;letter-spacing:0.6px">2D</div>
<div style="left:529px;top:82px;width:4px;height:1px;background:#000"></div>
<div class="t" style="left:2px;top:90.19px;color:#000;font-size:11px;line-height:14px;letter-spacing:0.2px">+000:00:02.502.612</div>
<div class="t" style="left:119px;top:90.19px;color:#000;font-size:11px;line-height:14px;">1-1</div>
<div class="t" style="left:141px;top:90.19px;color:#000;font-size:11px;line-height:14px;">LIN</div>
<div class="t" style="left:190px;top:90.19px;color:#000;font-size:11px;line-height:14px;">T</div>
<div class="t" style="left:300px;top:90.19px;color:#000;font-size:11px;line-height:14px;">OK</div>
<div class="t" style="left:331px;top:90.19px;color:#000;font-size:11px;line-height:14px;">Header</div>
<div class="t" style="left:422px;top:90.19px;color:#000;font-size:11px;line-height:14px;">13bit</div>
<div class="t" style="left:463px;top:90.19px;color:#000;font-size:11px;line-height:14px;letter-spacing:0.6px">03</div>
<div style="left:529px;top:97px;width:4px;height:1px;background:#000"></div>
<div class="t" style="left:2px;top:105.19px;color:#000;font-size:11px;line-height:14px;letter-spacing:0.2px">+000:00:02.512.308</div>
<div class="t" style="left:119px;top:105.19px;color:#000;font-size:11px;line-height:14px;">1-1</div>
<div class="t" style="left:141px;top:105.19px;color:#000;font-size:11px;line-height:14px;">LIN</div>
<div class="t" style="left:190px;top:105.19px;color:#000;font-size:11px;line-height:14px;">R</div>
<div class="t" style="left:300px;top:105.19px;color:#000;font-size:11px;line-height:14px;">NG</div>
<div class="t" style="left:331px;top:105.19px;color:#000;font-size:11px;line-height:14px;">NoRes. Err.</div>
<div style="left:423px;top:112px;width:4px;height:1px;background:#000"></div>
<div class="t" style="left:463px;top:105.19px;color:#000;font-size:11px;line-height:14px;letter-spacing:0.6px">03</div>
<div style="left:529px;top:112px;width:4px;height:1px;background:#000"></div>
<div class="t" style="left:2px;top:120.19px;color:#000;font-size:11px;line-height:14px;letter-spacing:0.2px">+000:00:03.002.618</div>
<div class="t" style="left:119px;top:120.19px;color:#000;font-size:11px;line-height:14px;">1-1</div>
<div class="t" style="left:141px;top:120.19px;color:#000;font-size:11px;line-height:14px;">LIN</div>
<div class="t" style="left:190px;top:120.19px;color:#000;font-size:11px;line-height:14px;">T</div>
<div class="t" style="left:300px;top:120.19px;color:#000;font-size:11px;line-height:14px;">OK</div>
<div class="t" style="left:331px;top:120.19px;color:#000;font-size:11px;line-height:14px;">Header</div>
<div class="t" style="left:422px;top:120.19px;color:#000;font-size:11px;line-height:14px;">13bit</div>
<div class="t" style="left:463px;top:120.19px;color:#000;font-size:11px;line-height:14px;letter-spacing:0.6px">15</div>
<div style="left:529px;top:127px;width:4px;height:1px;background:#000"></div>
<div class="t" style="left:2px;top:135.19px;color:#000;font-size:11px;line-height:14px;letter-spacing:0.2px">+000:00:03.006.158</div>
<div class="t" style="left:119px;top:135.19px;color:#000;font-size:11px;line-height:14px;">1-1</div>
<div class="t" style="left:141px;top:135.19px;color:#000;font-size:11px;line-height:14px;">LIN</div>
<div class="t" style="left:190px;top:135.19px;color:#000;font-size:11px;line-height:14px;">T</div>
<div class="t" style="left:300px;top:135.19px;color:#000;font-size:11px;line-height:14px;">OK</div>
<div class="t" style="left:331px;top:135.19px;color:#000;font-size:11px;line-height:14px;">Response</div>
<div style="left:423px;top:142px;width:4px;height:1px;background:#000"></div>
<div class="t" style="left:463px;top:135.19px;color:#000;font-size:11px;line-height:14px;letter-spacing:0.6px">15</div>
<div class="t" style="left:528px;top:135.19px;color:#000;font-size:11px;line-height:14px;letter-spacing:0.6px">2</div>
<div class="t" style="left:551px;top:135.19px;color:#000;font-size:11px;line-height:14px;letter-spacing:0.8px">00</div>
<div class="t" style="left:574px;top:135.19px;color:#000;font-size:11px;line-height:14px;letter-spacing:0.8px">00</div>
<div class="t" style="left:735px;top:135.19px;color:#000;font-size:11px;line-height:14px;letter-spacing:-0.2px">FF</div>
<div class="t" style="left:2px;top:150.19px;color:#000;font-size:11px;line-height:14px;letter-spacing:0.2px">+000:00:04.002.611</div>
<div class="t" style="left:119px;top:150.19px;color:#000;font-size:11px;line-height:14px;">1-1</div>
<div class="t" style="left:141px;top:150.19px;color:#000;font-size:11px;line-height:14px;">LIN</div>
<div class="t" style="left:190px;top:150.19px;color:#000;font-size:11px;line-height:14px;">T</div>
<div class="t" style="left:300px;top:150.19px;color:#000;font-size:11px;line-height:14px;">OK</div>
<div class="t" style="left:331px;top:150.19px;color:#000;font-size:11px;line-height:14px;">Header</div>
<div class="t" style="left:422px;top:150.19px;color:#000;font-size:11px;line-height:14px;">13bit</div>
<div class="t" style="left:463px;top:150.19px;color:#000;font-size:11px;line-height:14px;letter-spacing:0.6px">2D</div>
<div style="left:529px;top:157px;width:4px;height:1px;background:#000"></div>
<div class="t" style="left:2px;top:165.19px;color:#000;font-size:11px;line-height:14px;letter-spacing:0.2px">+000:00:04.015.223</div>
<div class="t" style="left:119px;top:165.19px;color:#000;font-size:11px;line-height:14px;">1-1</div>
<div class="t" style="left:141px;top:165.19px;color:#000;font-size:11px;line-height:14px;">LIN</div>
<div class="t" style="left:190px;top:165.19px;color:#000;font-size:11px;line-height:14px;">R</div>
<div class="t" style="left:300px;top:165.19px;color:#000;font-size:11px;line-height:14px;">NG</div>
<div class="t" style="left:331px;top:165.19px;color:#000;font-size:11px;line-height:14px;">NoRes. Err.</div>
<div style="left:423px;top:172px;width:4px;height:1px;background:#000"></div>
<div class="t" style="left:463px;top:165.19px;color:#000;font-size:11px;line-height:14px;letter-spacing:0.6px">2D</div>
<div style="left:529px;top:172px;width:4px;height:1px;background:#000"></div>
<div class="t" style="left:2px;top:180.19px;color:#000;font-size:11px;line-height:14px;letter-spacing:0.2px">+000:00:04.502.610</div>
<div class="t" style="left:119px;top:180.19px;color:#000;font-size:11px;line-height:14px;">1-1</div>
<div class="t" style="left:141px;top:180.19px;color:#000;font-size:11px;line-height:14px;">LIN</div>
<div class="t" style="left:190px;top:180.19px;color:#000;font-size:11px;line-height:14px;">T</div>
<div class="t" style="left:300px;top:180.19px;color:#000;font-size:11px;line-height:14px;">OK</div>
<div class="t" style="left:331px;top:180.19px;color:#000;font-size:11px;line-height:14px;">Header</div>
<div class="t" style="left:422px;top:180.19px;color:#000;font-size:11px;line-height:14px;">13bit</div>
<div class="t" style="left:463px;top:180.19px;color:#000;font-size:11px;line-height:14px;letter-spacing:0.6px">03</div>
<div style="left:529px;top:187px;width:4px;height:1px;background:#000"></div>
<div class="t" style="left:2px;top:195.19px;color:#000;font-size:11px;line-height:14px;letter-spacing:0.2px">+000:00:04.512.306</div>
<div class="t" style="left:119px;top:195.19px;color:#000;font-size:11px;line-height:14px;">1-1</div>
<div class="t" style="left:141px;top:195.19px;color:#000;font-size:11px;line-height:14px;">LIN</div>
<div class="t" style="left:190px;top:195.19px;color:#000;font-size:11px;line-height:14px;">R</div>
<div class="t" style="left:300px;top:195.19px;color:#000;font-size:11px;line-height:14px;">NG</div>
<div class="t" style="left:331px;top:195.19px;color:#000;font-size:11px;line-height:14px;">NoRes. Err.</div>
<div style="left:423px;top:202px;width:4px;height:1px;background:#000"></div>
<div class="t" style="left:463px;top:195.19px;color:#000;font-size:11px;line-height:14px;letter-spacing:0.6px">03</div>
<div style="left:529px;top:202px;width:4px;height:1px;background:#000"></div>
<div class="t" style="left:2px;top:210.19px;color:#000;font-size:11px;line-height:14px;letter-spacing:0.2px">+000:00:05.002.616</div>
<div class="t" style="left:119px;top:210.19px;color:#000;font-size:11px;line-height:14px;">1-1</div>
<div class="t" style="left:141px;top:210.19px;color:#000;font-size:11px;line-height:14px;">LIN</div>
<div class="t" style="left:190px;top:210.19px;color:#000;font-size:11px;line-height:14px;">T</div>
<div class="t" style="left:300px;top:210.19px;color:#000;font-size:11px;line-height:14px;">OK</div>
<div class="t" style="left:331px;top:210.19px;color:#000;font-size:11px;line-height:14px;">Header</div>
<div class="t" style="left:422px;top:210.19px;color:#000;font-size:11px;line-height:14px;">13bit</div>
<div class="t" style="left:463px;top:210.19px;color:#000;font-size:11px;line-height:14px;letter-spacing:0.6px">15</div>
<div style="left:529px;top:217px;width:4px;height:1px;background:#000"></div>
<div class="t" style="left:2px;top:225.19px;color:#000;font-size:11px;line-height:14px;letter-spacing:0.2px">+000:00:05.006.156</div>
<div class="t" style="left:119px;top:225.19px;color:#000;font-size:11px;line-height:14px;">1-1</div>
<div class="t" style="left:141px;top:225.19px;color:#000;font-size:11px;line-height:14px;">LIN</div>
<div class="t" style="left:190px;top:225.19px;color:#000;font-size:11px;line-height:14px;">T</div>
<div class="t" style="left:300px;top:225.19px;color:#000;font-size:11px;line-height:14px;">OK</div>
<div class="t" style="left:331px;top:225.19px;color:#000;font-size:11px;line-height:14px;">Response</div>
<div style="left:423px;top:232px;width:4px;height:1px;background:#000"></div>
<div class="t" style="left:463px;top:225.19px;color:#000;font-size:11px;line-height:14px;letter-spacing:0.6px">15</div>
<div class="t" style="left:528px;top:225.19px;color:#000;font-size:11px;line-height:14px;letter-spacing:0.6px">2</div>
<div class="t" style="left:551px;top:225.19px;color:#000;font-size:11px;line-height:14px;letter-spacing:0.8px">00</div>
<div class="t" style="left:574px;top:225.19px;color:#000;font-size:11px;line-height:14px;letter-spacing:0.8px">00</div>
<div class="t" style="left:735px;top:225.19px;color:#000;font-size:11px;line-height:14px;letter-spacing:-0.2px">FF</div>
<div class="t" style="left:2px;top:240.19px;color:#000;font-size:11px;line-height:14px;letter-spacing:0.2px">+000:00:06.002.615</div>
<div class="t" style="left:119px;top:240.19px;color:#000;font-size:11px;line-height:14px;">1-1</div>
<div class="t" style="left:141px;top:240.19px;color:#000;font-size:11px;line-height:14px;">LIN</div>
<div class="t" style="left:190px;top:240.19px;color:#000;font-size:11px;line-height:14px;">T</div>
<div class="t" style="left:300px;top:240.19px;color:#000;font-size:11px;line-height:14px;">OK</div>
<div class="t" style="left:331px;top:240.19px;color:#000;font-size:11px;line-height:14px;">Header</div>
<div class="t" style="left:422px;top:240.19px;color:#000;font-size:11px;line-height:14px;">13bit</div>
<div class="t" style="left:463px;top:240.19px;color:#000;font-size:11px;line-height:14px;letter-spacing:0.6px">2D</div>
<div style="left:529px;top:247px;width:4px;height:1px;background:#000"></div>
<div class="t" style="left:2px;top:255.19px;color:#000;font-size:11px;line-height:14px;letter-spacing:0.2px">+000:00:06.015.227</div>
<div class="t" style="left:119px;top:255.19px;color:#000;font-size:11px;line-height:14px;">1-1</div>
<div class="t" style="left:141px;top:255.19px;color:#000;font-size:11px;line-height:14px;">LIN</div>
<div class="t" style="left:190px;top:255.19px;color:#000;font-size:11px;line-height:14px;">R</div>
<div class="t" style="left:300px;top:255.19px;color:#000;font-size:11px;line-height:14px;">NG</div>
<div class="t" style="left:331px;top:255.19px;color:#000;font-size:11px;line-height:14px;">NoRes. Err.</div>
<div style="left:423px;top:262px;width:4px;height:1px;background:#000"></div>
<div class="t" style="left:463px;top:255.19px;color:#000;font-size:11px;line-height:14px;letter-spacing:0.6px">2D</div>
<div style="left:529px;top:262px;width:4px;height:1px;background:#000"></div>
</div>
<div style="left:1013px;top:121px;width:2px;height:17px;background:#8a8a8a"></div>
<div style="left:35px;top:390px;width:17px;height:2px;background:#8a8a8a"></div>
<div style="left:16px;top:401px;width:1008px;height:1px;background:#a0a0a0"></div>
<div style="left:16px;top:401px;width:1px;height:208px;background:#a0a0a0"></div>
<div style="left:16px;top:608px;width:1008px;height:1px;background:#ffffff"></div>
<div style="left:1023px;top:401px;width:1px;height:208px;background:#ffffff"></div>
<div style="left:17px;top:423px;width:1006px;height:1px;background:#ffffff"></div>
<div style="left:17px;top:423px;width:1px;height:184px;background:#ffffff"></div>
<div style="left:1022px;top:423px;width:1px;height:184px;background:#696969"></div>
<div style="left:1021px;top:424px;width:1px;height:182px;background:#a0a0a0"></div>
<div style="left:17px;top:606px;width:1006px;height:1px;background:#696969"></div>
<div style="left:18px;top:605px;width:1004px;height:1px;background:#a0a0a0"></div>
<div style="left:129px;top:405px;width:106px;height:18px;background:#f0f0f0"></div>
<div style="left:131px;top:405px;width:102px;height:1px;background:#ffffff"></div>
<div style="left:129px;top:407px;width:1px;height:16px;background:#ffffff"></div>
<div style="left:130px;top:406px;width:1px;height:1px;background:#ffffff"></div>
<div style="left:234px;top:407px;width:1px;height:16px;background:#696969"></div>
<div style="left:233px;top:406px;width:1px;height:17px;background:#a0a0a0"></div>
<div style="left:233px;top:406px;width:1px;height:1px;background:#696969"></div>
<div class="t" style="left:152px;top:407.19px;color:#000;font-size:11px;line-height:14px;">Log Search</div>
<div style="left:17px;top:403px;width:112px;height:21px;background:#f0f0f0"></div>
<div style="left:19px;top:403px;width:108px;height:1px;background:#ffffff"></div>
<div style="left:17px;top:405px;width:1px;height:19px;background:#ffffff"></div>
<div style="left:18px;top:404px;width:1px;height:1px;background:#ffffff"></div>
<div style="left:128px;top:405px;width:1px;height:19px;background:#696969"></div>
<div style="left:127px;top:404px;width:1px;height:20px;background:#a0a0a0"></div>
<div style="left:127px;top:404px;width:1px;height:1px;background:#696969"></div>
<div class="t" style="left:53px;top:405.19px;color:#000;font-size:11px;line-height:14px;">Filtering</div>
<div style="left:25px;top:429px;width:93px;height:26px;border:3px solid #e0141e"></div>
<svg style="position:absolute;left:30px;top:435px" width="12" height="12" viewBox="0 0 12 12">
<path d="M10.2 1.8 A5.5 5.5 0 0 0 1.8 10.2" fill="none" stroke="#a0a0a0" stroke-width="1"/>
<path d="M9.3 2.7 A4.3 4.3 0 0 0 2.7 9.3" fill="none" stroke="#696969" stroke-width="1"/>
<circle cx="6" cy="6" r="4" fill="#fff"/>
<path d="M9.3 2.7 A4.3 4.3 0 0 0 2.7 9.3" fill="none" stroke="#696969" stroke-width="1"/>
<path d="M1.8 10.2 A5.5 5.5 0 0 0 10.2 1.8" fill="none" stroke="#fff" stroke-width="1"/>
<circle cx="6" cy="6" r="2" fill="#000"/>
</svg>
<div class="t" style="left:46px;top:435.19px;color:#000;font-size:11px;line-height:14px;">Error Filtering</div>
<div style="left:46px;top:434px;width:67px;height:16px;border:1px dotted #000"></div>
<svg style="position:absolute;left:30px;top:458px" width="12" height="12" viewBox="0 0 12 12">
<path d="M10.2 1.8 A5.5 5.5 0 0 0 1.8 10.2" fill="none" stroke="#a0a0a0" stroke-width="1"/>
<path d="M9.3 2.7 A4.3 4.3 0 0 0 2.7 9.3" fill="none" stroke="#696969" stroke-width="1"/>
<circle cx="6" cy="6" r="4" fill="#f0f0f0"/>
<path d="M9.3 2.7 A4.3 4.3 0 0 0 2.7 9.3" fill="none" stroke="#696969" stroke-width="1"/>
<path d="M1.8 10.2 A5.5 5.5 0 0 0 10.2 1.8" fill="none" stroke="#fff" stroke-width="1"/>

</svg>
<div class="t" style="left:46px;top:458.19px;color:#a0a0a0;font-size:11px;line-height:14px;">ID Filtering</div>
<svg style="position:absolute;left:30px;top:482px" width="12" height="12" viewBox="0 0 12 12">
<path d="M10.2 1.8 A5.5 5.5 0 0 0 1.8 10.2" fill="none" stroke="#a0a0a0" stroke-width="1"/>
<path d="M9.3 2.7 A4.3 4.3 0 0 0 2.7 9.3" fill="none" stroke="#696969" stroke-width="1"/>
<circle cx="6" cy="6" r="4" fill="#fff"/>
<path d="M9.3 2.7 A4.3 4.3 0 0 0 2.7 9.3" fill="none" stroke="#696969" stroke-width="1"/>
<path d="M1.8 10.2 A5.5 5.5 0 0 0 10.2 1.8" fill="none" stroke="#fff" stroke-width="1"/>

</svg>
<div class="t" style="left:46px;top:481.19px;color:#000;font-size:11px;line-height:14px;">Label Filtering</div>
<div style="left:30px;top:507px;width:90px;height:42px;background:#f0f0f0"></div>
<div style="left:30px;top:507px;width:90px;height:1px;background:#ffffff"></div>
<div style="left:30px;top:507px;width:1px;height:42px;background:#ffffff"></div>
<div style="left:119px;top:507px;width:1px;height:42px;background:#696969"></div>
<div style="left:118px;top:508px;width:1px;height:40px;background:#a0a0a0"></div>
<div style="left:30px;top:548px;width:90px;height:1px;background:#696969"></div>
<div style="left:31px;top:547px;width:88px;height:1px;background:#a0a0a0"></div>
<svg style="position:absolute;left:46px;top:520px" width="14" height="16" viewBox="0 0 14 16">
<defs><linearGradient id="fg" x1="0" y1="0" x2="0" y2="1"><stop offset="0" stop-color="#606060"/><stop offset="0.5" stop-color="#d0d0d0"/><stop offset="1" stop-color="#ffffff"/></linearGradient></defs>
<path d="M0.8 0.8 L12.2 0.8 L12.2 1.8 L7.6 6.8 L7.6 13.2 L5.4 14.6 L5.4 6.8 L0.8 1.8 Z" fill="url(#fg)" stroke="#000" stroke-width="1" stroke-linejoin="miter"/>
</svg>
<div class="t" style="left:64px;top:522.19px;color:#000;font-size:11px;line-height:14px;">Execute</div>
<div style="left:30px;top:555px;width:90px;height:42px;background:#f0f0f0"></div>
<div style="left:30px;top:555px;width:90px;height:1px;background:#ffffff"></div>
<div style="left:30px;top:555px;width:1px;height:42px;background:#ffffff"></div>
<div style="left:119px;top:555px;width:1px;height:42px;background:#696969"></div>
<div style="left:118px;top:556px;width:1px;height:40px;background:#a0a0a0"></div>
<div style="left:30px;top:596px;width:90px;height:1px;background:#696969"></div>
<div style="left:31px;top:595px;width:88px;height:1px;background:#a0a0a0"></div>
<svg style="position:absolute;left:50px;top:570px" width="20" height="12" viewBox="50 570 20 12">
<path d="M53.5 573.5 L59.5 573.5 M53.5 573.5 L53.5 579.5 M56.5 574.5 L58.5 577.5 L63.5 577.5 L66 574.5 L68.5 574.5 L68.5 576.5 L64.5 580.5 L58.5 580.5 L55.5 578.5" fill="none" stroke="#ffffff" stroke-width="1"/>
<path d="M52.5 572.5 L58.5 572.5 M52.5 572.5 L52.5 578.5 L54.5 577.5 M55.5 573.5 L57.5 576.5 L62.5 576.5 L65 573.5 L67.5 573.5 L67.5 575.5 L63.5 579.5 L57.5 579.5 L54.5 577.5" fill="none" stroke="#8a8a8a" stroke-width="1"/>
</svg>
<div class="t" style="left:72px;top:569.19px;color:#a0a0a0;font-size:11px;line-height:14px;">Clear</div>
<div style="left:143px;top:439px;width:181px;height:156px;border:1px solid #a0a0a0;border-right-color:#a0a0a0;"></div>
<div style="left:144px;top:440px;width:181px;height:156px;border:1px solid #ffffff;"></div>
<div style="left:143px;top:439px;width:181px;height:156px;border-top:1px solid #a0a0a0;border-left:1px solid #a0a0a0;"></div>
<div style="left:148px;top:433px;width:93px;height:14px;background:#f0f0f0"></div>
<div class="t" style="left:150px;top:434.19px;color:#000;font-size:11px;line-height:14px;">ID Filtering Setting</div>
<div style="left:340px;top:439px;width:184px;height:156px;border:1px solid #a0a0a0;border-right-color:#a0a0a0;"></div>
<div style="left:341px;top:440px;width:184px;height:156px;border:1px solid #ffffff;"></div>
<div style="left:340px;top:439px;width:184px;height:156px;border-top:1px solid #a0a0a0;border-left:1px solid #a0a0a0;"></div>
<div style="left:345px;top:433px;width:107px;height:14px;background:#f0f0f0"></div>
<div class="t" style="left:347px;top:434.19px;color:#000;font-size:11px;line-height:14px;">Label Filtering Setting</div>
<div style="left:159px;top:448px;width:89px;height:25px;background:#f0f0f0"></div>
<div style="left:159px;top:448px;width:89px;height:1px;background:#ffffff"></div>
<div style="left:159px;top:448px;width:1px;height:25px;background:#ffffff"></div>
<div style="left:247px;top:448px;width:1px;height:25px;background:#696969"></div>
<div style="left:246px;top:449px;width:1px;height:23px;background:#a0a0a0"></div>
<div style="left:159px;top:472px;width:89px;height:1px;background:#696969"></div>
<div style="left:160px;top:471px;width:87px;height:1px;background:#a0a0a0"></div>
<div class="t" style="left:177px;top:453.19px;color:#000;font-size:11px;line-height:14px;">Get ID List</div>
<div class="t" style="left:254px;top:458.19px;color:#000;font-size:11px;line-height:14px;">Max:1024</div>
<div style="left:159px;top:477px;width:13px;height:13px;background:#fff;border:1px solid #a0a0a0;border-right-color:#ffffff;border-bottom-color:#ffffff"><div style="left:0;top:0;width:11px;height:11px;border:1px solid #696969;border-right-color:#e3e3e3;border-bottom-color:#e3e3e3"></div></div>
<div class="t" style="left:176px;top:476.19px;color:#000;font-size:11px;line-height:14px;">Check All</div>
<div style="left:356px;top:451px;width:13px;height:13px;background:#fff;border:1px solid #a0a0a0;border-right-color:#ffffff;border-bottom-color:#ffffff"><div style="left:0;top:0;width:11px;height:11px;border:1px solid #696969;border-right-color:#e3e3e3;border-bottom-color:#e3e3e3"></div></div>
<div class="t" style="left:374px;top:450.19px;color:#000;font-size:11px;line-height:14px;">Check All</div>
<div style="left:356px;top:468px;width:152px;height:120px;background:#fff"></div>
<div style="left:356px;top:468px;width:152px;height:1px;background:#a0a0a0"></div>
<div style="left:356px;top:468px;width:1px;height:120px;background:#a0a0a0"></div>
<div style="left:357px;top:469px;width:150px;height:1px;background:#696969"></div>
<div style="left:357px;top:469px;width:1px;height:118px;background:#696969"></div>
<div style="left:356px;top:587px;width:152px;height:1px;background:#ffffff"></div>
<div style="left:507px;top:468px;width:1px;height:120px;background:#ffffff"></div>
<div style="left:357px;top:586px;width:150px;height:1px;background:#e3e3e3"></div>
<div style="left:506px;top:469px;width:1px;height:118px;background:#e3e3e3"></div>
<div style="left:373px;top:470px;width:133px;height:13px;background:#ff0000"></div>
<div style="left:373px;top:483px;width:133px;height:13px;background:#1e90ff"></div>
<div style="left:360px;top:471px;width:11px;height:11px;background:#fff;border:1px solid #a0a0a0"></div>
<svg style="position:absolute;left:360px;top:471px" width="11" height="11" viewBox="0 0 11 11"><path d="M2.5 5.2 L4.5 7.5 L8.8 2.6" fill="none" stroke="#000" stroke-width="1.8"/></svg>
<div style="left:360px;top:484px;width:11px;height:11px;background:#fff;border:1px solid #a0a0a0"></div>
<svg style="position:absolute;left:360px;top:484px" width="11" height="11" viewBox="0 0 11 11"><path d="M2.5 5.2 L4.5 7.5 L8.8 2.6" fill="none" stroke="#000" stroke-width="1.8"/></svg>
<div class="t" style="left:374px;top:470.19px;color:#ffb000;font-size:11px;line-height:14px;">Response_03</div>
<div class="t" style="left:374px;top:483.19px;color:#e0ffff;font-size:11px;line-height:14px;">Response_2D</div>
</div></body></html>
